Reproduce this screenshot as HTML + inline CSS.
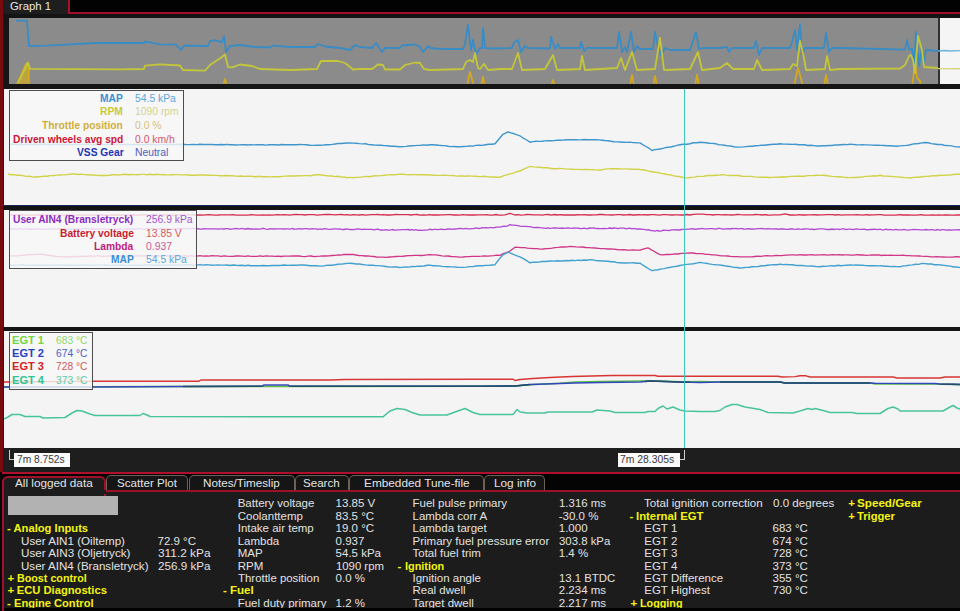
<!DOCTYPE html>
<html><head><meta charset="utf-8"><style>
html,body{margin:0;padding:0;}
body{width:960px;height:611px;overflow:hidden;position:relative;background:#1c1c1c;font-family:"Liberation Sans", sans-serif;}
.r{position:absolute;}
.t{position:absolute;white-space:pre;transform-origin:0 0;}
svg{position:absolute;left:0;top:0;}
</style></head><body>
<div class=r style="left:0;top:0;width:960px;height:18px;background:#020202"></div>
<div class=r style="left:3px;top:0;width:65px;height:14px;background:#1e1e1e"></div>
<div class=r style="left:68px;top:0;width:2px;height:14.5px;background:#a8102c"></div>
<div class=r style="left:68px;top:12.3px;width:892px;height:2.2px;background:#a0102c"></div>
<div class=r style="left:3px;top:14.4px;width:957px;height:3.4px;background:#141414"></div>
<!-- overview -->
<div class=r style="left:3px;top:17.7px;width:957px;height:71.5px;background:#151515"></div>
<div class=r style="left:9.4px;top:17.7px;width:928.6px;height:66px;background:#8b8b8b"></div>
<div class=r style="left:938px;top:17.7px;width:1.6px;height:66px;background:#303030"></div>
<div class=r style="left:939.6px;top:17.7px;width:20.4px;height:66px;background:#f5f5f5"></div>
<!-- panels -->
<div class=r style="left:4px;top:89px;width:956px;height:116px;background:#f4f4f4"></div>
<div class=r style="left:3px;top:205px;width:957px;height:4.6px;background:#141414"></div>
<div class=r style="left:3px;top:205px;width:957px;height:1.2px;background:#18245a"></div>
<div class=r style="left:4px;top:209.6px;width:956px;height:117.2px;background:#f4f4f4"></div>
<div class=r style="left:3px;top:326.8px;width:957px;height:3.9px;background:#141414"></div>
<div class=r style="left:4px;top:330.7px;width:956px;height:117.1px;background:#f4f4f4"></div>
<div class=r style="left:2.5px;top:447.8px;width:957.5px;height:24.5px;background:#1e1e1e"></div>
<!-- left border -->
<div class=r style="left:0;top:0;width:2.6px;height:474px;background:#780a10"></div>
<!-- bottom tabs -->
<div class=r style="left:0;top:472.3px;width:960px;height:2px;background:#b0102c"></div>
<div class=r style="left:0;top:474.3px;width:960px;height:16px;background:#040404"></div>
<div class=r style="left:0;top:490.2px;width:960px;height:1.8px;background:#9c1028"></div>
<div class=r style="left:0;top:472px;width:1.6px;height:139px;background:#040404"></div>
<!-- tabs -->
<div class=r style="left:106px;top:475px;width:81.6px;height:15px;background:#151515;border:1px solid #6e6052;border-bottom:none;border-radius:5px 5px 0 0;box-sizing:border-box;"></div>
<div class=r style="left:188.6px;top:475px;width:106.4px;height:15px;background:#151515;border:1px solid #6e6052;border-bottom:none;border-radius:5px 5px 0 0;box-sizing:border-box;"></div>
<div class=r style="left:295px;top:475px;width:54.4px;height:15px;background:#151515;border:1px solid #6e6052;border-bottom:none;border-radius:5px 5px 0 0;box-sizing:border-box;"></div>
<div class=r style="left:349.4px;top:475px;width:134.9px;height:15px;background:#151515;border:1px solid #6e6052;border-bottom:none;border-radius:5px 5px 0 0;box-sizing:border-box;"></div>
<div class=r style="left:484.3px;top:475px;width:61.2px;height:15px;background:#151515;border:1px solid #6e6052;border-bottom:none;border-radius:5px 5px 0 0;box-sizing:border-box;"></div>
<div class=r style="left:1.6px;top:475.5px;width:104.4px;height:20px;background:#1c1c1c;border:2px solid #a0102a;border-bottom:none;border-radius:6px 6px 0 0;box-sizing:border-box;"></div>
<div class=r style="left:1.5px;top:490px;width:104.5px;height:4px;background:#1c1c1c;"></div>
<div class=r style="left:1.6px;top:480px;width:2px;height:131px;background:#a0102a;"></div>
<!-- search box -->
<div class=r style="left:7.5px;top:495.5px;width:110px;height:19.5px;background:#b2b2b2"></div>

<svg width="960" height="611" viewBox="0 0 960 611">
<defs><clipPath id="ov"><rect x="9.4" y="17.7" width="950.6" height="66"/></clipPath><clipPath id="c1"><rect x="4" y="89" width="956" height="116"/></clipPath><clipPath id="c2"><rect x="4" y="209.6" width="956" height="117.2"/></clipPath><clipPath id="c3"><rect x="4" y="330.7" width="956" height="117.1"/></clipPath><clipPath id="ovl"><rect x="183" y="330" width="79" height="118"/><rect x="290" y="330" width="240" height="118"/><rect x="645" y="330" width="45" height="118"/><rect x="720" y="330" width="150" height="118"/><rect x="940" y="330" width="20" height="118"/></clipPath></defs>
<g clip-path="url(#ov)">
<polygon points="17,84 25,65 28,63 30,70 29,84" fill="#d8b01c" opacity="0.65"/>
<polyline points="9.4,86.0 16.0,86.0 17.0,84.0 22.0,73.0 26.0,64.0 28.0,66.0 29.0,84.0 31.0,86.0 223.0,86.0 225.0,79.0 227.0,86.0 467.0,86.0 470.0,72.0 474.0,86.0 481.0,86.0 483.0,77.0 485.0,86.0 551.0,86.0 553.0,80.0 555.0,86.0 630.0,86.0 632.0,75.0 634.0,86.0 653.0,86.0 655.0,76.0 657.0,86.0 695.0,86.0 697.0,75.0 699.0,86.0 794.0,86.0 798.0,68.0 803.0,86.0 824.0,86.0 826.0,75.0 828.0,86.0 912.0,86.0 913.0,80.0 915.0,62.0 917.0,78.0 920.0,81.0 921.0,86.0 938.0,86.0" fill="none" stroke="#d4a81c" stroke-width="1.8" stroke-linejoin="round" opacity="1"/>
<polyline points="16.0,20.6 27.0,20.6 29.0,46.0 47.0,45.6 95.0,43.0 120.0,43.0 144.0,43.0 145.0,41.5 160.0,44.4 176.0,44.6 181.0,50.0 184.0,45.5 200.0,46.0 208.0,46.0 210.0,41.0 215.0,40.4 222.0,42.0 224.0,36.0 226.0,52.0 230.0,46.0 240.0,45.0 255.0,47.0 270.0,47.5 273.0,45.6 290.0,47.0 315.0,47.0 318.0,44.0 325.0,46.5 340.0,48.0 350.0,50.0 355.0,45.0 360.0,47.0 372.0,48.0 376.0,43.0 382.0,52.0 385.0,48.0 400.0,48.0 402.0,45.5 415.0,44.5 420.0,47.0 423.0,52.0 428.0,46.0 430.0,48.0 440.0,49.0 463.0,49.0 465.0,44.0 468.0,25.0 471.0,50.0 473.0,40.0 476.0,54.0 480.0,48.0 482.0,48.0 483.0,28.0 485.0,48.0 492.0,48.5 512.0,48.0 514.0,42.0 518.0,40.0 521.0,52.0 525.0,46.0 528.0,48.0 550.0,48.5 551.0,37.0 555.0,49.0 558.0,44.0 560.0,48.0 580.0,48.0 581.0,42.0 584.0,51.0 587.0,48.0 600.0,48.0 617.0,48.0 619.0,32.0 622.0,52.0 625.0,47.0 627.0,52.0 631.0,32.0 634.0,52.0 637.0,46.0 640.0,49.0 653.0,49.0 655.0,32.0 658.0,47.0 661.0,55.0 665.0,48.0 670.0,50.0 690.0,50.0 696.0,32.0 699.0,49.0 703.0,48.0 720.0,48.0 727.0,47.0 729.0,52.0 732.0,48.0 754.0,48.0 756.0,41.0 759.0,55.0 762.0,48.0 790.0,48.0 792.0,42.0 795.0,30.0 797.0,50.0 800.0,24.0 802.0,54.0 805.0,48.0 824.0,48.0 826.0,33.0 829.0,52.0 832.0,48.0 840.0,48.0 880.0,49.0 905.0,49.6 907.0,40.0 909.0,49.6 912.0,49.0 914.0,65.0 916.0,32.0 919.0,66.0 922.0,48.0 924.0,63.0 926.0,50.0 938.0,51.0" fill="none" stroke="#3a8cc4" stroke-width="1.8" stroke-linejoin="round" opacity="1"/>
<polyline points="18.0,83.0 28.0,62.5 30.0,68.8 120.0,69.4 144.0,69.0 145.0,65.6 160.0,64.4 180.0,65.5 183.0,70.0 205.0,70.6 210.0,65.0 222.0,57.0 225.0,54.5 228.0,67.0 232.0,67.4 240.0,64.5 252.0,66.0 260.0,69.0 290.0,70.0 317.0,69.0 321.0,61.0 338.0,61.0 345.0,63.0 353.0,69.5 360.0,69.0 372.0,69.0 378.0,64.5 383.0,65.0 385.0,69.5 400.0,69.5 405.0,65.0 415.0,62.5 420.0,63.0 424.0,69.0 430.0,70.0 463.0,69.0 466.0,62.0 470.0,60.0 473.0,62.0 475.0,53.0 478.0,68.0 480.0,69.0 484.0,64.0 488.0,70.0 500.0,69.0 512.0,69.0 518.0,53.0 522.0,70.0 545.0,69.0 553.0,55.0 557.0,70.0 580.0,69.0 582.0,56.0 585.0,70.0 600.0,69.0 617.0,68.0 621.0,58.0 625.0,70.0 632.0,52.0 637.0,70.0 655.0,69.0 660.0,38.0 664.0,70.0 690.0,69.0 698.0,52.0 702.0,70.0 720.0,68.0 727.0,63.0 733.0,69.0 754.0,69.0 757.0,60.0 762.0,70.0 790.0,69.0 793.0,64.0 797.0,66.0 800.0,41.0 804.0,58.0 806.0,70.0 825.0,69.0 827.0,56.0 830.0,70.0 840.0,69.0 900.0,68.5 905.0,65.0 909.0,56.0 911.0,55.0 913.0,60.0 915.0,73.0 918.0,36.0 922.0,50.0 924.0,67.0 938.0,68.0" fill="none" stroke="#c4c63a" stroke-width="1.8" stroke-linejoin="round" opacity="1"/>
<polyline points="938.0,51.0 945.0,50.5 950.0,51.0 960.0,50.6" fill="none" stroke="#6fb2da" stroke-width="1.4" stroke-linejoin="round" opacity="1"/>
<polyline points="938.0,68.6 960.0,68.8" fill="none" stroke="#d6d67a" stroke-width="1.4" stroke-linejoin="round" opacity="1"/>
</g>
<g clip-path="url(#c1)"><polyline points="10.0,144.4 13.3,144.3 16.7,144.6 20.0,144.2 23.1,144.5 26.2,144.4 29.2,144.2 32.3,144.5 35.4,144.2 38.5,144.5 41.5,144.2 44.6,144.3 47.7,144.5 50.8,144.7 53.8,144.3 56.9,144.3 60.0,144.6 63.1,144.8 66.2,144.5 69.2,144.4 72.3,144.8 75.4,144.2 78.5,144.7 81.5,144.4 84.6,144.3 87.7,144.3 90.8,144.4 93.8,144.7 96.9,144.3 100.0,144.5 103.1,144.6 106.1,144.4 109.2,144.5 112.3,144.2 115.4,144.2 118.4,144.3 121.5,144.6 124.6,144.5 127.7,144.4 130.7,144.6 133.8,144.5 136.9,144.4 140.0,144.7 143.0,144.6 146.1,144.3 149.2,144.5 152.3,144.5 155.3,144.7 158.4,144.6 161.5,144.4 164.6,144.8 167.6,144.3 170.7,144.5 173.8,144.7 176.9,144.3 179.9,144.5 183.0,144.2 186.4,144.6 189.8,144.6 193.2,144.4 196.6,144.6 200.0,144.2 203.0,144.5 206.0,144.4 209.0,144.5 212.0,144.4 215.0,144.7 218.0,144.8 221.0,144.5 224.0,144.7 227.0,144.4 230.0,144.8 233.0,144.8 236.0,145.0 239.0,144.9 242.0,144.7 245.0,144.8 248.0,145.0 251.0,144.6 254.0,144.9 257.0,144.8 260.0,144.8 263.1,144.7 266.2,145.1 269.2,144.7 272.3,144.7 275.4,144.7 278.5,145.0 281.5,144.5 284.6,144.7 287.7,144.7 290.8,144.8 293.8,144.8 296.9,144.8 300.0,144.4 303.3,144.6 306.7,144.7 310.0,145.2 313.3,145.4 316.7,145.1 320.0,145.3 323.0,145.1 326.0,144.8 329.0,144.7 332.0,144.4 335.0,144.0 338.0,143.5 341.0,143.5 344.0,143.2 347.0,143.0 350.0,143.0 353.1,143.1 356.2,143.2 359.4,143.6 362.5,143.9 365.6,143.8 368.8,144.6 371.9,144.7 375.0,145.1 378.1,145.3 381.2,145.3 384.4,145.6 387.5,145.7 390.6,146.3 393.8,146.2 396.9,146.5 400.0,146.8 403.0,146.6 406.0,146.4 409.0,146.0 412.0,145.8 415.0,145.6 418.0,145.4 421.0,145.3 424.0,144.9 427.0,145.2 430.0,144.8 433.0,144.7 436.0,145.0 439.0,145.3 442.0,145.5 445.0,145.6 448.0,146.3 451.0,146.6 454.0,146.5 457.0,146.8 460.0,146.8 463.2,146.5 466.4,146.4 469.5,146.0 472.7,146.1 475.9,145.4 479.1,145.1 482.3,145.4 485.5,144.8 488.6,144.3 491.8,144.3 495.0,143.7 499.0,139.0 503.0,134.3 508.0,131.9 511.0,132.9 514.0,133.7 517.0,134.8 520.0,135.8 523.3,138.2 526.7,140.0 530.0,142.2 533.0,141.6 536.0,141.3 539.0,141.4 542.0,141.3 545.0,140.9 548.0,140.8 551.0,140.7 554.0,140.6 557.0,140.2 560.0,140.2 563.0,140.1 566.0,139.8 569.0,139.7 572.0,139.7 575.0,139.6 578.0,139.8 581.0,139.9 584.0,139.5 587.0,139.7 590.0,139.6 593.0,139.8 596.0,139.8 599.0,139.9 602.0,140.2 605.0,140.5 608.0,140.7 611.0,141.3 614.0,141.7 617.0,141.9 620.0,142.0 623.3,142.2 626.7,142.4 630.0,142.1 633.3,142.6 636.7,142.8 640.0,142.9 643.0,144.8 646.0,146.5 649.0,148.2 652.0,150.5 655.1,149.6 658.2,149.3 661.3,148.8 664.4,147.9 667.6,147.3 670.7,147.0 673.8,146.3 676.9,145.4 680.0,144.8 683.3,144.3 686.7,144.2 690.0,143.7 693.3,142.8 696.7,142.7 700.0,142.3 703.1,142.5 706.2,142.7 709.2,143.3 712.3,143.4 715.4,143.7 718.5,144.7 721.5,144.9 724.6,145.3 727.7,145.9 730.8,146.0 733.8,146.7 736.9,147.1 740.0,147.1 743.1,146.9 746.2,146.6 749.2,146.3 752.3,146.2 755.4,145.8 758.5,145.6 761.5,145.1 764.6,145.3 767.7,144.7 770.8,144.5 773.8,144.3 776.9,144.2 780.0,143.7 783.1,144.1 786.2,144.1 789.2,144.2 792.3,144.4 795.4,144.3 798.5,144.7 801.5,144.7 804.6,144.8 807.7,145.5 810.8,145.3 813.8,145.6 816.9,146.0 820.0,146.0 823.0,145.7 826.0,145.7 829.0,145.5 832.0,145.5 835.0,144.9 838.0,145.0 841.0,144.7 844.0,144.5 847.0,144.6 850.0,144.3 853.1,144.4 856.2,144.7 859.4,144.9 862.5,144.7 865.6,144.9 868.8,144.9 871.9,145.1 875.0,145.3 878.1,145.2 881.2,145.4 884.4,145.5 887.5,145.8 890.6,145.8 893.8,146.0 896.9,146.2 900.0,145.9 903.1,145.6 906.2,145.4 909.4,145.0 912.5,144.1 915.6,143.7 918.8,143.5 921.9,142.9 925.0,142.5 928.2,142.8 931.4,143.6 934.5,144.0 937.7,144.5 940.9,144.4 944.1,145.2 947.3,145.5 950.5,145.6 953.6,146.4 956.8,146.9 960.0,147.0" fill="none" stroke="#3e96cc" stroke-width="1.4" stroke-linejoin="round" opacity="1"/><polyline points="8.0,174.0 11.0,174.8 14.0,174.6 17.0,175.3 20.0,175.2 23.0,175.6 26.0,176.4 29.0,176.2 32.0,176.8 35.0,177.0 38.1,176.7 41.2,176.5 44.2,176.1 47.3,176.3 50.4,175.6 53.5,175.5 56.5,175.1 59.6,175.0 62.7,174.9 65.8,174.9 68.8,174.4 71.9,174.0 75.0,173.9 78.1,174.5 81.2,174.1 84.4,174.6 87.5,174.7 90.6,175.0 93.8,175.0 96.9,175.4 100.0,175.5 103.1,175.5 106.2,175.5 109.4,175.2 112.5,174.8 115.6,174.6 118.8,175.0 121.9,174.6 125.0,174.3 128.2,174.8 131.4,174.5 134.5,174.6 137.7,174.7 140.9,174.4 144.1,174.4 147.3,174.7 150.5,174.3 153.6,174.7 156.8,174.3 160.0,174.6 163.0,174.7 166.0,174.9 169.0,174.9 172.0,174.7 175.0,174.6 178.0,174.6 181.0,174.9 184.0,174.9 187.0,174.7 190.0,175.2 193.0,175.1 196.0,175.2 199.0,175.0 202.0,175.0 205.0,175.0 208.0,175.2 211.0,175.2 214.0,175.4 217.0,175.4 220.0,175.7 223.1,175.8 226.2,175.5 229.4,175.7 232.5,175.7 235.6,176.1 238.8,176.3 241.9,176.0 245.0,176.4 248.1,176.2 251.2,176.1 254.4,176.7 257.5,176.5 260.6,176.5 263.8,176.8 266.9,176.7 270.0,176.9 273.1,176.8 276.2,176.7 279.4,176.7 282.5,176.4 285.6,176.1 288.8,176.0 291.9,175.9 295.0,176.0 298.1,175.8 301.2,175.9 304.4,175.6 307.5,175.6 310.6,175.7 313.8,175.0 316.9,174.8 320.0,174.8 323.0,175.2 326.0,175.6 329.0,176.0 332.0,176.0 335.0,176.6 338.0,176.3 341.0,177.1 344.0,177.0 347.0,177.7 350.0,177.4 353.1,177.8 356.2,177.4 359.4,177.4 362.5,176.9 365.6,176.4 368.8,176.7 371.9,176.2 375.0,175.8 378.1,175.9 381.2,175.6 384.4,175.3 387.5,174.9 390.6,174.7 393.8,174.8 396.9,174.5 400.0,174.1 403.1,174.3 406.2,174.6 409.4,174.7 412.5,174.6 415.6,174.6 418.8,174.7 421.9,174.7 425.0,174.8 428.1,175.0 431.2,174.9 434.4,175.3 437.5,175.4 440.6,175.4 443.8,175.2 446.9,175.4 450.0,175.6 453.1,175.4 456.2,176.1 459.4,176.0 462.5,176.0 465.6,176.2 468.8,175.9 471.9,176.1 475.0,176.3 478.1,176.5 481.2,176.6 484.4,176.3 487.5,176.7 490.6,177.0 493.8,177.0 496.9,177.2 500.0,177.3 503.3,175.8 506.7,174.8 510.0,173.9 513.3,173.1 516.7,171.7 520.0,171.0 523.3,169.4 526.7,167.8 530.0,166.4 533.3,166.9 536.7,167.1 540.0,167.2 543.3,167.8 546.7,167.8 550.0,168.2 553.1,168.7 556.2,168.7 559.4,168.5 562.5,168.6 565.6,168.9 568.8,169.1 571.9,169.2 575.0,169.4 578.1,169.4 581.2,169.6 584.4,169.5 587.5,169.5 590.6,169.6 593.8,169.8 596.9,169.9 600.0,170.2 603.3,169.4 606.7,168.9 610.0,168.8 613.0,168.6 616.0,168.8 619.0,168.7 622.0,169.1 625.0,168.9 628.0,168.9 631.0,169.3 634.0,169.2 637.0,169.1 640.0,169.5 643.0,169.8 646.0,170.3 649.0,171.3 652.0,171.7 655.0,172.2 658.0,172.5 661.0,173.4 664.0,173.8 667.0,174.5 670.0,174.8 673.0,175.6 676.0,176.2 679.0,176.5 682.0,177.2 685.0,177.9 688.2,177.7 691.4,177.4 694.5,177.1 697.7,176.4 700.9,176.4 704.1,176.2 707.3,175.5 710.5,175.5 713.6,175.5 716.8,175.2 720.0,175.0 723.1,174.6 726.2,175.1 729.4,175.5 732.5,175.5 735.6,175.5 738.8,175.5 741.9,176.2 745.0,176.4 748.1,176.4 751.2,176.4 754.4,176.9 757.5,177.1 760.6,177.2 763.8,177.3 766.9,177.3 770.0,177.5 773.1,177.4 776.2,177.2 779.4,177.2 782.5,176.8 785.6,177.0 788.8,176.6 791.9,176.4 795.0,176.3 798.1,176.2 801.2,176.1 804.4,176.2 807.5,175.6 810.6,175.6 813.8,175.5 816.9,175.2 820.0,175.4 823.0,175.3 826.0,175.5 829.0,176.0 832.0,176.4 835.0,176.6 838.0,176.7 841.0,176.8 844.0,177.4 847.0,177.5 850.0,177.6 853.0,177.4 856.0,177.5 859.0,177.3 862.0,177.1 865.0,176.4 868.0,176.3 871.0,176.1 874.0,175.8 877.0,176.0 880.0,175.3 883.0,176.0 886.0,176.1 889.0,176.3 892.0,176.4 895.0,176.9 898.0,176.9 901.0,177.3 904.0,177.5 907.0,177.6 910.0,178.0 913.0,177.5 916.0,177.1 919.0,177.2 922.0,176.8 925.0,176.4 928.0,176.4 931.0,176.0 934.0,175.6 937.0,175.7 940.0,175.3 943.3,175.4 946.7,175.0 950.0,175.1 953.3,174.5 956.7,174.3 960.0,174.3" fill="none" stroke="#d2d24a" stroke-width="1.4" stroke-linejoin="round" opacity="1"/></g>
<g clip-path="url(#c2)"><polyline points="9.0,214.8 12.0,214.8 15.1,214.9 18.1,214.8 21.1,214.7 24.2,214.9 27.2,215.3 30.2,215.2 33.3,215.2 36.3,214.8 39.3,215.0 42.3,214.9 45.4,214.8 48.4,214.8 51.4,214.8 54.5,215.3 57.5,215.2 60.5,215.2 63.6,215.2 66.6,214.8 69.6,214.9 72.7,215.1 75.7,215.1 78.7,215.2 81.8,215.2 84.8,214.8 87.8,215.1 90.9,215.1 93.9,215.0 96.9,214.8 100.0,215.0 103.0,214.8 106.0,215.3 109.0,215.2 112.1,215.0 115.1,214.9 118.1,215.2 121.2,215.0 124.2,215.2 127.2,215.2 130.3,215.0 133.3,214.9 136.3,215.1 139.4,215.0 142.4,214.8 145.4,214.9 148.5,215.2 151.5,214.7 154.5,214.7 157.6,215.1 160.6,214.9 163.6,215.0 166.7,215.0 169.7,214.9 172.7,215.3 175.7,214.8 178.8,214.9 181.8,214.8 184.8,215.1 187.9,214.9 190.9,214.9 193.9,215.1 197.0,214.9 200.0,215.0 203.0,215.2 206.0,214.8 209.0,214.7 212.0,214.8 215.0,215.1 218.0,215.0 221.0,214.8 224.0,214.9 227.0,214.8 230.0,214.9 233.0,214.7 236.0,215.1 239.0,215.2 242.0,215.2 245.0,215.1 248.0,215.2 251.0,214.6 254.0,214.8 257.0,215.2 260.0,215.1 263.0,214.8 266.0,215.2 269.0,215.0 272.0,215.1 275.0,214.8 278.0,214.7 281.0,214.8 284.0,214.6 287.0,214.8 290.0,215.1 293.0,214.7 296.0,214.5 299.0,214.6 302.0,214.6 305.0,215.0 308.0,214.7 311.0,214.7 314.0,214.6 317.0,215.1 320.0,214.8 323.0,214.6 326.1,214.5 329.1,214.5 332.1,214.6 335.2,214.9 338.2,214.6 341.2,214.5 344.3,214.8 347.3,214.6 350.3,215.1 353.4,214.6 356.4,214.8 359.4,215.0 362.5,214.7 365.5,215.1 368.5,214.8 371.6,214.6 374.6,214.7 377.6,214.5 380.7,214.8 383.7,214.6 386.7,215.0 389.8,215.0 392.8,214.8 395.8,214.5 398.9,214.7 401.9,214.6 404.9,214.6 408.0,214.6 411.0,215.0 414.0,214.6 417.0,214.5 420.1,215.1 423.1,214.8 426.1,215.1 429.2,214.7 432.2,215.0 435.2,214.9 438.3,215.0 441.3,214.9 444.3,214.8 447.4,214.6 450.4,214.6 453.4,215.0 456.5,215.0 459.5,215.1 462.5,214.7 465.6,214.9 468.6,215.0 471.6,214.9 474.7,215.0 477.7,214.8 480.7,214.9 483.8,214.9 486.8,214.7 489.8,215.1 492.9,215.1 495.9,214.5 498.9,215.1 502.0,215.1 505.0,214.9 510.0,213.3 515.0,215.0 518.0,214.6 521.0,215.1 524.1,214.9 527.1,214.5 530.1,214.6 533.1,214.9 536.1,214.8 539.1,214.9 542.2,215.1 545.2,214.6 548.2,214.5 551.2,215.1 554.2,214.5 557.2,215.0 560.3,214.6 563.3,215.0 566.3,215.0 569.3,215.0 572.3,214.8 575.3,215.0 578.4,214.6 581.4,214.9 584.4,214.7 587.4,215.0 590.4,215.0 593.4,214.8 596.5,214.8 599.5,214.5 602.5,214.5 605.5,214.9 608.5,214.8 611.6,215.0 614.6,214.9 617.6,214.6 620.6,214.7 623.6,215.0 626.6,214.8 629.7,214.5 632.7,215.0 635.7,215.0 638.7,214.6 641.7,214.8 644.7,214.7 647.8,215.0 650.8,214.7 653.8,214.6 656.8,214.8 659.8,215.1 662.8,214.6 665.9,214.6 668.9,214.9 671.9,215.0 674.9,214.8 677.9,214.8 680.9,215.0 684.0,215.0 687.0,214.5 690.0,215.0 693.3,214.3 696.7,214.1 700.0,214.1 703.3,214.2 706.7,214.7 710.0,214.6 713.0,215.0 716.1,214.6 719.1,214.6 722.2,214.8 725.2,214.7 728.3,214.8 731.3,215.0 734.3,214.9 737.4,214.5 740.4,214.7 743.5,214.8 746.5,214.8 749.6,214.9 752.6,214.8 755.7,214.5 758.7,214.6 761.7,215.0 764.8,214.7 767.8,215.0 770.9,215.1 773.9,214.9 777.0,214.9 780.0,214.9 785.0,213.8 790.0,215.0 793.0,214.8 796.1,215.1 799.1,214.7 802.1,215.0 805.2,215.0 808.2,214.9 811.2,214.8 814.3,214.6 817.3,215.0 820.4,214.8 823.4,214.9 826.4,214.6 829.5,214.6 832.5,214.6 835.5,215.0 838.6,214.7 841.6,215.1 844.6,214.8 847.7,214.9 850.7,214.8 853.8,214.9 856.8,214.6 859.8,214.8 862.9,215.1 865.9,214.7 868.9,215.0 872.0,214.8 875.0,214.8 878.0,214.6 881.1,214.6 884.1,215.2 887.1,215.1 890.2,215.1 893.2,215.1 896.2,215.2 899.3,214.7 902.3,215.0 905.4,214.9 908.4,215.0 911.4,215.2 914.5,215.1 917.5,215.2 920.5,214.7 923.6,215.0 926.6,215.1 929.6,215.1 932.7,215.0 935.7,215.2 938.8,214.9 941.8,215.2 944.8,214.9 947.9,215.0 950.9,215.2 953.9,215.1 957.0,214.9 960.0,215.0" fill="none" stroke="#d42e4e" stroke-width="1.3" stroke-linejoin="round" opacity="1"/><polyline points="9.0,228.8 11.0,229.0 13.0,228.9 15.1,229.1 17.1,229.1 19.1,228.6 21.1,228.6 23.2,229.3 25.2,228.8 27.2,228.8 29.2,229.4 31.2,229.0 33.3,229.3 35.3,229.0 37.3,229.1 39.3,228.7 41.4,229.1 43.4,229.3 45.4,229.0 47.4,229.2 49.4,229.2 51.5,228.6 53.5,229.2 55.5,229.1 57.5,228.8 59.6,228.6 61.6,229.3 63.6,229.0 65.6,229.2 67.6,229.3 69.7,229.2 71.7,229.4 73.7,228.9 75.7,229.3 77.8,229.0 79.8,229.4 81.8,229.3 83.8,228.6 85.8,228.7 87.9,228.7 89.9,229.4 91.9,228.9 93.9,229.1 96.0,228.8 98.0,229.0 100.0,228.9 102.0,228.9 104.0,229.1 106.0,229.1 108.0,229.3 110.0,229.1 112.0,229.4 114.0,229.3 116.0,229.4 118.0,229.1 120.0,228.7 122.0,229.3 124.0,229.4 126.0,229.3 128.0,229.0 130.0,229.1 132.0,228.7 134.0,229.2 136.0,229.0 138.0,228.7 140.0,228.5 142.0,229.2 144.0,229.4 146.0,228.5 148.0,229.2 150.0,228.8 152.0,228.6 154.0,228.7 156.0,229.1 158.0,229.2 160.0,228.5 162.0,229.0 164.0,228.5 166.0,229.1 168.0,228.7 170.0,229.2 172.0,229.3 174.0,228.9 176.0,229.3 178.0,228.7 180.0,228.5 182.0,228.9 184.0,228.4 186.0,228.6 188.0,228.7 190.0,228.9 192.0,228.5 194.0,228.4 196.0,229.1 198.0,228.6 200.0,229.2 202.0,229.2 204.0,228.7 206.0,228.8 208.0,228.8 210.0,228.9 212.0,228.9 214.0,228.9 216.0,228.9 218.0,229.2 220.0,228.8 222.0,228.8 224.0,229.0 226.0,228.6 228.0,228.7 230.0,229.3 232.0,228.9 234.0,228.9 236.0,228.4 238.0,228.8 240.0,228.9 242.0,228.4 244.0,229.0 246.0,229.0 248.0,228.5 250.0,229.0 252.0,228.9 254.0,229.1 256.0,228.8 258.0,229.1 260.0,229.1 262.0,228.5 264.0,228.5 266.0,229.1 268.0,229.3 270.0,228.7 272.0,228.9 274.0,229.0 276.0,228.8 278.0,228.8 280.0,228.8 282.0,228.8 284.0,229.0 286.0,228.8 288.0,228.8 290.0,229.2 292.0,228.5 294.0,229.0 296.0,229.2 298.0,228.8 300.0,228.7 302.0,229.2 304.0,228.7 306.0,228.7 308.0,228.9 310.0,229.2 312.0,228.6 314.0,228.8 316.0,228.8 318.0,229.3 320.0,228.9 322.0,229.3 324.0,228.7 326.0,228.9 328.0,229.2 330.0,229.4 332.0,229.1 334.0,228.9 336.0,228.8 338.0,229.2 340.0,228.9 342.0,229.5 344.0,229.5 346.0,229.0 348.0,229.1 350.0,229.6 352.0,229.4 354.0,229.6 356.0,229.2 358.0,229.0 360.0,229.2 362.0,229.7 364.0,229.2 366.0,229.3 368.0,229.4 370.0,229.4 372.0,229.4 374.0,229.9 376.0,229.3 378.0,229.1 380.0,230.0 382.0,230.0 384.0,230.1 386.0,229.6 388.0,230.1 390.0,230.1 392.0,229.5 394.0,230.0 396.0,230.1 398.0,229.9 400.0,229.8 402.0,229.6 404.0,229.7 406.0,229.6 408.0,229.5 410.0,230.0 412.0,229.7 414.0,230.2 416.0,229.6 418.0,230.3 420.0,230.2 422.0,230.3 424.0,230.2 426.0,230.2 428.0,229.8 430.0,229.2 432.0,229.8 434.0,229.3 436.0,229.3 438.0,229.6 440.0,229.4 442.0,229.2 444.0,229.6 446.0,229.3 448.0,229.0 450.0,228.8 452.0,229.3 454.0,228.9 456.0,229.1 458.0,228.7 460.0,228.5 462.0,228.7 464.0,228.9 466.0,228.3 468.0,228.8 470.0,228.8 472.0,228.7 474.0,228.6 476.0,227.8 478.0,228.3 480.0,228.5 482.0,227.7 484.0,227.8 486.0,227.7 488.0,227.9 490.0,227.7 492.0,227.7 494.0,227.9 496.0,227.2 498.0,227.2 500.0,227.2 502.0,226.7 504.0,226.1 506.0,226.4 508.0,225.8 510.0,224.6 512.0,225.2 514.0,225.2 516.0,225.4 518.0,225.7 520.0,226.1 522.0,226.3 524.0,226.3 526.0,226.3 528.0,226.6 530.0,226.7 532.0,227.2 534.0,227.6 536.0,227.5 538.0,227.4 540.0,227.7 542.0,227.9 544.0,228.1 546.0,228.3 548.0,227.9 550.0,228.3 552.0,228.2 554.0,228.0 556.0,228.0 558.0,228.1 560.0,228.3 562.0,228.0 564.0,228.3 566.0,228.1 568.0,227.9 570.0,228.2 572.0,228.3 574.0,227.8 576.0,228.1 578.0,228.1 580.0,228.5 582.0,228.6 584.0,228.1 586.0,228.6 588.0,228.5 590.0,228.0 592.0,228.2 594.0,227.9 596.0,228.6 598.0,228.4 600.0,228.6 602.0,228.6 604.0,228.5 606.0,228.6 608.0,228.4 610.0,228.0 612.0,228.5 614.0,228.0 616.0,228.1 618.0,228.7 620.0,228.1 622.0,228.2 624.0,228.2 626.0,228.9 628.0,228.3 630.0,228.2 632.0,228.9 634.0,228.3 636.0,229.0 638.0,228.8 640.0,229.0 642.1,229.4 644.3,229.4 646.4,230.0 648.6,229.6 650.7,230.6 652.9,230.7 655.0,231.2 657.0,230.5 659.1,231.0 661.1,231.1 663.2,230.2 665.2,230.3 667.3,230.4 669.3,230.6 671.4,229.9 673.4,229.8 675.5,229.7 677.5,230.0 679.5,230.0 681.6,229.5 683.6,229.4 685.7,229.3 687.7,229.2 689.8,229.1 691.8,228.7 693.9,229.0 695.9,229.3 698.0,228.7 700.0,228.9 702.0,228.4 704.0,228.9 706.0,228.9 708.0,228.9 710.0,228.7 712.0,228.7 714.0,228.9 716.0,229.1 718.0,228.4 720.0,228.4 722.0,229.0 724.0,229.1 726.0,228.8 728.0,228.7 730.0,229.0 732.0,228.5 734.0,228.6 736.0,228.5 738.0,228.9 740.0,228.7 742.0,228.6 744.0,229.0 746.0,229.2 748.0,228.7 750.0,229.0 752.0,228.8 754.0,229.2 756.0,228.9 758.0,228.7 760.0,228.6 762.0,228.5 764.0,228.9 766.0,228.8 768.0,228.6 770.0,228.8 772.0,228.8 774.0,229.2 776.0,228.6 778.0,229.4 780.0,228.9 782.0,229.0 784.0,228.9 786.0,229.3 788.0,229.3 790.0,229.0 792.0,229.0 794.0,229.2 796.0,229.3 798.0,228.9 800.0,229.2 802.0,229.4 804.0,229.0 806.0,228.8 808.0,228.8 810.0,229.3 812.0,229.2 814.0,229.5 816.0,229.4 818.0,228.9 820.0,228.8 822.0,228.9 824.0,228.9 826.0,229.3 828.0,229.5 830.0,229.5 832.0,229.0 834.0,229.5 836.0,229.1 838.0,229.2 840.0,229.5 842.0,228.9 844.0,228.9 846.0,229.6 848.0,229.1 850.0,229.2 852.0,229.4 854.0,229.5 856.0,228.9 858.0,229.2 860.0,229.3 862.0,229.4 864.0,229.1 866.0,229.5 868.0,229.8 870.0,229.3 872.0,229.5 874.0,229.1 876.0,229.3 878.0,229.6 880.0,229.2 882.0,229.9 884.0,229.9 886.0,229.2 888.0,229.9 890.0,229.4 892.0,229.8 894.0,229.8 896.0,229.4 898.0,229.8 900.0,229.8 902.0,229.9 904.0,229.4 906.0,229.9 908.0,230.1 910.0,229.8 912.0,229.7 914.0,229.4 916.0,229.7 918.0,229.6 920.0,229.9 922.0,229.9 924.0,229.8 926.0,229.5 928.0,229.9 930.0,229.9 932.0,229.5 934.0,230.2 936.0,230.0 938.0,229.5 940.0,230.3 942.0,229.6 944.0,229.7 946.0,230.1 948.0,230.0 950.0,230.0 952.0,230.1 954.0,229.9 956.0,229.8 958.0,229.7 960.0,230.0" fill="none" stroke="#b048d0" stroke-width="1.3" stroke-linejoin="round" opacity="1"/><polyline points="9.0,256.1 12.1,255.9 15.2,255.8 18.3,255.7 21.4,255.3 24.5,255.3 27.6,254.5 30.7,254.6 33.8,254.7 36.9,254.3 40.0,254.2 43.3,254.3 46.7,255.0 50.0,255.3 53.3,256.0 56.7,256.5 60.0,256.7 63.1,256.8 66.2,256.7 69.2,257.0 72.3,256.9 75.4,256.4 78.5,256.7 81.5,256.2 84.6,256.5 87.7,256.1 90.8,255.9 93.8,256.4 96.9,255.9 100.0,255.8 103.0,256.3 106.1,256.2 109.1,255.9 112.1,256.3 115.2,256.0 118.2,256.1 121.2,255.8 124.2,256.3 127.3,256.1 130.3,256.3 133.3,256.2 136.4,255.9 139.4,255.9 142.4,255.8 145.5,255.8 148.5,255.7 151.5,255.9 154.5,256.1 157.6,255.7 160.6,256.1 163.6,255.9 166.7,255.9 169.7,256.2 172.7,256.0 175.8,255.9 178.8,256.0 181.8,256.1 184.8,255.7 187.9,256.3 190.9,255.7 193.9,256.1 197.0,256.2 200.0,255.7 203.0,256.2 206.0,255.9 209.0,256.1 212.0,255.7 215.0,255.8 218.0,255.9 221.0,256.3 224.0,255.9 227.0,256.2 230.0,256.3 233.0,256.3 236.0,256.0 239.0,256.0 242.0,256.1 245.0,256.3 248.0,255.9 251.0,256.3 254.0,256.3 257.0,256.4 260.0,255.9 263.0,256.4 266.0,255.9 269.0,256.1 272.0,256.2 275.0,256.4 278.0,256.1 281.0,256.5 284.0,256.2 287.0,256.1 290.0,256.1 293.0,256.0 296.0,256.0 299.0,256.0 302.0,256.4 305.0,256.6 308.0,256.1 311.0,256.0 314.0,256.6 317.0,256.3 320.0,256.2 323.0,255.9 326.0,256.0 329.0,255.9 332.0,255.5 335.0,255.3 338.0,254.8 341.0,255.1 344.0,254.4 347.0,254.5 350.0,254.5 353.0,254.4 356.0,255.0 359.0,255.5 362.0,255.6 365.0,256.0 368.0,255.9 371.0,256.4 374.0,256.5 377.0,257.2 380.0,257.2 383.1,257.1 386.2,257.3 389.4,257.0 392.5,256.9 395.6,256.5 398.8,256.3 401.9,256.3 405.0,256.0 408.1,255.7 411.2,255.6 414.4,255.3 417.5,255.3 420.6,255.5 423.8,255.3 426.9,254.9 430.0,254.7 433.0,254.8 436.0,254.9 439.0,255.3 442.0,255.8 445.0,256.1 448.0,256.0 451.0,256.5 454.0,256.7 457.0,256.9 460.0,257.1 463.1,257.0 466.2,256.7 469.2,256.7 472.3,256.3 475.4,256.3 478.5,256.4 481.5,256.2 484.6,255.8 487.7,256.1 490.8,255.8 493.8,255.6 496.9,255.1 500.0,255.3 503.3,253.7 506.7,252.5 510.0,251.0 515.0,247.2 518.1,247.3 521.2,247.7 524.4,247.7 527.5,248.1 530.6,248.4 533.8,248.7 536.9,248.7 540.0,249.2 543.0,249.0 546.0,248.6 549.0,248.5 552.0,248.2 555.0,247.7 558.0,247.4 561.0,246.9 564.0,247.0 567.0,246.8 570.0,246.3 573.1,246.6 576.2,246.9 579.4,247.1 582.5,247.0 585.6,247.5 588.8,247.6 591.9,247.9 595.0,248.0 598.1,248.3 601.2,248.6 604.4,248.7 607.5,249.0 610.6,248.8 613.8,249.1 616.9,249.5 620.0,249.8 623.3,249.6 626.7,250.0 630.0,250.1 633.3,249.8 636.7,250.2 640.0,250.1 644.0,248.9 648.0,247.8 651.0,249.6 654.0,251.3 657.0,253.1 660.0,254.7 663.0,254.8 666.0,254.5 669.0,254.5 672.0,254.3 675.0,253.8 678.0,254.0 681.0,253.3 684.0,253.3 687.0,253.1 690.0,252.9 693.1,253.0 696.2,253.7 699.4,253.7 702.5,253.7 705.6,254.3 708.8,254.3 711.9,254.8 715.0,254.9 718.1,255.3 721.2,255.8 724.4,255.9 727.5,256.0 730.6,256.4 733.8,256.6 736.9,256.7 740.0,256.8 743.0,256.9 746.0,256.8 749.0,256.9 752.0,256.8 755.0,256.5 758.0,256.2 761.0,256.4 764.0,255.8 767.0,255.7 770.0,255.9 773.0,255.8 776.0,255.4 779.0,255.6 782.0,255.6 785.0,255.2 788.0,255.1 791.0,254.9 794.0,254.8 797.0,255.1 800.0,254.6 803.0,255.0 806.0,255.0 809.0,254.8 812.0,254.6 815.0,255.1 818.0,254.8 821.0,254.8 824.0,254.7 827.0,255.1 830.0,254.8 833.0,254.7 836.0,254.9 839.0,254.7 842.0,255.0 845.0,254.9 848.0,254.8 851.0,255.1 854.0,255.2 857.0,254.7 860.0,255.0 863.1,254.9 866.2,255.3 869.2,255.2 872.3,254.9 875.4,255.0 878.5,254.9 881.5,255.5 884.6,255.1 887.7,255.3 890.8,255.2 893.8,255.3 896.9,255.3 900.0,255.4 903.1,255.2 906.2,255.7 909.2,255.6 912.3,255.8 915.4,255.9 918.5,256.0 921.5,256.2 924.6,256.3 927.7,256.4 930.8,256.8 933.8,256.8 936.9,256.6 940.0,256.9 943.3,257.0 946.7,257.2 950.0,257.2 953.3,257.0 956.7,256.7 960.0,257.0" fill="none" stroke="#d03686" stroke-width="1.3" stroke-linejoin="round" opacity="1"/><polyline points="10.0,265.3 13.3,265.3 16.7,265.1 20.0,265.0 23.1,264.8 26.2,265.2 29.2,265.1 32.3,265.3 35.4,265.0 38.5,265.3 41.5,265.0 44.6,265.3 47.7,265.2 50.8,265.0 53.8,265.1 56.9,265.2 60.0,264.9 63.1,265.1 66.2,265.3 69.2,265.0 72.3,265.3 75.4,265.2 78.5,265.3 81.5,265.0 84.6,264.9 87.7,265.3 90.8,265.3 93.8,265.1 96.9,264.9 100.0,264.9 103.1,265.2 106.1,265.0 109.2,265.4 112.3,265.2 115.4,264.9 118.4,265.2 121.5,265.0 124.6,265.4 127.7,265.3 130.7,265.1 133.8,265.2 136.9,265.2 140.0,265.3 143.0,265.4 146.1,264.8 149.2,265.0 152.3,265.2 155.3,265.0 158.4,265.2 161.5,264.9 164.6,265.3 167.6,265.1 170.7,264.9 173.8,265.2 176.9,265.0 179.9,264.9 183.0,265.1 186.4,264.8 189.8,264.8 193.2,265.2 196.6,265.1 200.0,264.6 203.0,265.1 206.0,264.7 209.0,264.9 212.0,265.3 215.0,265.1 218.0,265.0 221.0,265.1 224.0,265.1 227.0,265.0 230.0,265.5 233.0,265.0 236.0,265.3 239.0,265.5 242.0,265.3 245.0,265.7 248.0,265.3 251.0,265.8 254.0,265.8 257.0,265.7 260.0,265.8 263.1,265.5 266.2,265.7 269.2,265.7 272.3,265.5 275.4,265.4 278.5,265.5 281.5,265.3 284.6,265.0 287.7,265.4 290.8,265.1 293.8,265.2 296.9,265.3 300.0,264.9 303.3,265.0 306.7,265.2 310.0,265.7 313.3,265.7 316.7,265.8 320.0,266.1 323.0,266.1 326.0,265.4 329.0,265.2 332.0,265.2 335.0,264.8 338.0,264.3 341.0,264.1 344.0,263.8 347.0,263.4 350.0,263.2 353.1,263.5 356.2,264.0 359.4,264.0 362.5,264.5 365.6,264.9 368.8,265.2 371.9,265.1 375.0,265.5 378.1,265.6 381.2,265.9 384.4,266.2 387.5,266.7 390.6,267.1 393.8,266.9 396.9,267.0 400.0,267.6 403.0,267.1 406.0,266.9 409.0,267.1 412.0,266.4 415.0,266.6 418.0,266.1 421.0,266.3 424.0,266.0 427.0,265.3 430.0,265.1 433.0,265.8 436.0,265.8 439.0,265.9 442.0,266.4 445.0,266.6 448.0,266.7 451.0,266.9 454.0,266.9 457.0,267.3 460.0,267.4 463.2,267.4 466.4,267.1 469.5,266.6 472.7,266.6 475.9,266.0 479.1,265.7 482.3,265.8 485.5,265.4 488.6,265.4 491.8,265.0 495.0,264.7 499.0,259.4 503.0,254.8 508.0,252.1 511.0,253.4 514.0,254.7 517.0,255.8 520.0,256.8 523.3,258.6 526.7,260.7 530.0,262.8 533.0,262.1 536.0,262.3 539.0,262.1 542.0,261.5 545.0,261.5 548.0,261.2 551.0,261.0 554.0,261.1 557.0,260.7 560.0,261.0 563.0,261.0 566.0,260.5 569.0,260.8 572.0,260.2 575.0,260.6 578.0,260.1 581.0,260.5 584.0,260.0 587.0,260.2 590.0,259.6 593.0,259.9 596.0,260.6 599.0,260.8 602.0,261.0 605.0,261.0 608.0,261.3 611.0,261.7 614.0,261.8 617.0,262.6 620.0,262.8 623.3,263.0 626.7,263.0 630.0,262.9 633.3,262.8 636.7,263.3 640.0,263.1 643.0,265.2 646.0,267.1 649.0,269.0 652.0,270.6 655.1,270.1 658.2,269.7 661.3,268.9 664.4,268.6 667.6,267.7 670.7,267.2 673.8,266.6 676.9,266.2 680.0,265.5 683.3,264.9 686.7,264.4 690.0,264.1 693.3,263.8 696.7,263.1 700.0,262.4 703.1,262.9 706.2,263.3 709.2,263.9 712.3,264.4 715.4,264.7 718.5,264.9 721.5,265.3 724.6,265.8 727.7,266.2 730.8,266.6 733.8,267.4 736.9,267.5 740.0,268.0 743.1,267.8 746.2,267.4 749.2,267.3 752.3,266.7 755.4,266.6 758.5,266.5 761.5,265.8 764.6,265.8 767.7,265.3 770.8,264.9 773.8,264.6 776.9,264.7 780.0,264.1 783.1,264.6 786.2,264.4 789.2,264.8 792.3,264.7 795.4,265.2 798.5,265.5 801.5,265.4 804.6,265.8 807.7,266.1 810.8,265.9 813.8,266.2 816.9,266.6 820.0,266.8 823.0,266.2 826.0,266.4 829.0,265.9 832.0,265.7 835.0,266.0 838.0,265.3 841.0,265.7 844.0,265.4 847.0,265.2 850.0,265.0 853.1,265.1 856.2,265.0 859.4,265.2 862.5,265.1 865.6,265.6 868.8,265.7 871.9,265.8 875.0,265.6 878.1,265.9 881.2,265.8 884.4,266.2 887.5,266.3 890.6,266.6 893.8,266.5 896.9,266.6 900.0,266.8 903.1,265.9 906.2,265.8 909.4,265.1 912.5,264.9 915.6,264.3 918.8,264.4 921.9,263.4 925.0,263.6 928.2,264.0 931.4,264.0 934.5,264.7 937.7,264.6 940.9,265.0 944.1,265.4 947.3,265.8 950.5,266.1 953.6,267.0 956.8,267.0 960.0,267.6" fill="none" stroke="#42a0d0" stroke-width="1.4" stroke-linejoin="round" opacity="1"/></g>
<g clip-path="url(#c3)"><polyline points="4.0,382.0 92.0,381.2 199.0,381.2 201.0,380.0 330.0,380.0 345.0,379.5 480.0,379.2 513.0,379.2 515.0,380.5 520.0,379.5 533.0,378.5 550.0,377.5 572.0,376.5 612.0,375.5 655.0,375.5 658.0,376.3 778.0,376.3 782.0,377.0 795.0,376.6 800.0,375.8 806.0,375.8 810.0,377.0 893.0,377.0 897.0,378.0 940.0,378.0 945.0,377.0 960.0,377.0" fill="none" stroke="#d83434" stroke-width="1.4" stroke-linejoin="round" opacity="1"/><polyline points="4.0,387.0 183.0,386.5 262.0,386.5 290.0,386.5 480.0,386.3 515.0,386.0 530.0,384.8 560.0,383.3 575.0,382.0 600.0,381.5 640.0,381.0 650.0,380.8 680.0,381.8 700.0,381.5 720.0,382.0 780.0,382.0 785.0,383.0 870.0,383.0 875.0,384.0 935.0,384.0 940.0,384.3 960.0,384.5" fill="none" stroke="#62c040" stroke-width="1.5" stroke-linejoin="round" opacity="1"/><polyline points="4.0,387.0 92.0,387.0 183.0,386.5 262.0,386.3 264.0,385.0 288.0,385.0 290.0,386.3 480.0,386.2 515.0,386.0 530.0,384.5 560.0,383.5 575.0,383.0 600.0,382.6 640.0,382.0 650.0,381.0 680.0,382.0 700.0,382.5 720.0,382.0 780.0,382.0 785.0,383.0 870.0,383.0 875.0,383.2 935.0,383.4 940.0,384.0 960.0,384.5" fill="none" stroke="#3048bc" stroke-width="1.5" stroke-linejoin="round" opacity="1"/><g clip-path="url(#ovl)"><polyline points="4.0,387.0 92.0,387.0 183.0,386.5 262.0,386.3 264.0,385.0 288.0,385.0 290.0,386.3 480.0,386.2 515.0,386.0 530.0,384.5 560.0,383.5 575.0,383.0 600.0,382.6 640.0,382.0 650.0,381.0 680.0,382.0 700.0,382.5 720.0,382.0 780.0,382.0 785.0,383.0 870.0,383.0 875.0,383.2 935.0,383.4 940.0,384.0 960.0,384.5" fill="none" stroke="#22506a" stroke-width="1.6" stroke-linejoin="round" opacity="1"/></g><polyline points="4.0,419.0 8.0,417.0 12.0,414.5 20.0,414.5 25.0,416.5 40.0,416.5 43.0,418.0 65.0,417.5 72.0,413.0 77.0,410.5 82.0,411.0 90.0,414.0 95.0,415.5 140.0,415.5 143.0,413.5 147.0,415.0 150.0,416.5 383.0,416.8 390.0,411.0 397.0,408.5 405.0,409.5 412.0,412.5 420.0,415.0 447.0,415.0 455.0,412.0 465.0,408.5 473.0,412.5 480.0,414.5 513.0,414.5 517.0,409.5 520.0,412.0 527.0,413.0 545.0,413.0 548.0,412.0 592.0,412.0 597.0,410.0 610.0,411.0 615.0,412.5 645.0,412.5 648.0,411.5 655.0,411.5 658.0,408.5 663.0,406.0 667.0,409.0 673.0,407.0 680.0,410.0 685.0,411.0 700.0,411.5 715.0,411.5 720.0,410.5 725.0,407.0 732.0,404.5 737.0,404.5 745.0,407.0 760.0,409.5 768.0,412.5 793.0,413.0 800.0,411.0 808.0,408.5 812.0,409.5 815.0,408.5 825.0,411.0 830.0,412.5 852.0,412.5 857.0,413.5 880.0,413.5 888.0,408.5 893.0,407.0 898.0,409.0 900.0,411.0 943.0,411.0 950.0,407.0 953.0,405.5 957.0,408.0 960.0,409.0" fill="none" stroke="#48c49a" stroke-width="1.5" stroke-linejoin="round" opacity="1"/></g>
</svg>
<!-- legends -->
<div class=r style="left:9.3px;top:89.7px;width:174.4px;height:71.2px;background:rgba(248,248,248,0.82);border:1.4px solid #4c4c4c;box-sizing:border-box;"></div>
<div class=r style="left:8.9px;top:210.1px;width:188.5px;height:58.6px;background:rgba(248,248,248,0.82);border:1.4px solid #4c4c4c;box-sizing:border-box;"></div>
<div class=r style="left:9.1px;top:331.6px;width:84.4px;height:58.3px;background:rgba(248,248,248,0.82);border:1.4px solid #4c4c4c;box-sizing:border-box;"></div>
<!-- cursor -->
<div class=r style="left:683.9px;top:89px;width:1.3px;height:358.8px;background:#3cc8bc"></div>
<!-- time labels -->
<div class=r style="left:13.7px;top:452.7px;width:56.2px;height:14.2px;background:#fafafa"></div>
<div class=r style="left:9px;top:450px;width:1.2px;height:9.5px;background:#cfcfcf"></div>
<div class=r style="left:9px;top:458.6px;width:4.7px;height:1.2px;background:#cfcfcf"></div>
<div class=r style="left:617.5px;top:453px;width:62.5px;height:13.9px;background:#fafafa"></div>
<div class=r style="left:684px;top:450px;width:1.2px;height:10px;background:#cfcfcf"></div>
<div class=r style="left:680px;top:459px;width:5px;height:1.2px;background:#cfcfcf"></div>

<div class=t style='left:10.40px;top:1.00px;font-size:11.5px;line-height:11.5px;font-weight:normal;color:#e6e6e6;transform:scaleX(0.9889);'>Graph 1</div><div class=t style='left:100.44px;top:93.00px;font-size:11.2px;line-height:11.2px;font-weight:bold;color:#3b8fd4;transform:scaleX(0.9150);'>MAP</div><div class=t style='left:134.70px;top:93.00px;font-size:11.5px;line-height:11.5px;font-weight:normal;color:#5aa6de;transform:scaleX(0.9000);'>54.5 kPa</div><div class=t style='left:100.44px;top:106.00px;font-size:11.2px;line-height:11.2px;font-weight:bold;color:#c9c93a;transform:scaleX(0.9150);'>RPM</div><div class=t style='left:134.70px;top:106.00px;font-size:11.5px;line-height:11.5px;font-weight:normal;color:#d4d48a;transform:scaleX(0.9000);'>1090 rpm</div><div class=t style='left:42.45px;top:120.00px;font-size:11.2px;line-height:11.2px;font-weight:bold;color:#cfae3a;transform:scaleX(0.9150);'>Throttle position</div><div class=t style='left:134.70px;top:120.00px;font-size:11.5px;line-height:11.5px;font-weight:normal;color:#d2c27e;transform:scaleX(0.9000);'>0.0 %</div><div class=t style='left:12.83px;top:134.00px;font-size:11.2px;line-height:11.2px;font-weight:bold;color:#cc1838;transform:scaleX(0.9150);'>Driven wheels avg spd</div><div class=t style='left:134.70px;top:134.00px;font-size:11.5px;line-height:11.5px;font-weight:normal;color:#d4566e;transform:scaleX(0.9000);'>0.0 km/h</div><div class=t style='left:76.53px;top:147.00px;font-size:11.2px;line-height:11.2px;font-weight:bold;color:#1c34b8;transform:scaleX(0.9150);'>VSS Gear</div><div class=t style='left:134.70px;top:147.00px;font-size:11.5px;line-height:11.5px;font-weight:normal;color:#4a5ec0;transform:scaleX(0.9000);'>Neutral</div><div class=t style='left:13.26px;top:214.00px;font-size:11.2px;line-height:11.2px;font-weight:bold;color:#8c2cc0;transform:scaleX(0.9150);'>User AIN4 (Bransletryck)</div><div class=t style='left:146.25px;top:214.00px;font-size:11.5px;line-height:11.5px;font-weight:normal;color:#a056d0;transform:scaleX(0.9000);'>256.9 kPa</div><div class=t style='left:59.54px;top:228.00px;font-size:11.2px;line-height:11.2px;font-weight:bold;color:#c81c30;transform:scaleX(0.9150);'>Battery voltage</div><div class=t style='left:146.25px;top:228.00px;font-size:11.5px;line-height:11.5px;font-weight:normal;color:#d45a62;transform:scaleX(0.9000);'>13.85 V</div><div class=t style='left:94.24px;top:241.00px;font-size:11.2px;line-height:11.2px;font-weight:bold;color:#bc1c80;transform:scaleX(0.9150);'>Lambda</div><div class=t style='left:146.25px;top:241.00px;font-size:11.5px;line-height:11.5px;font-weight:normal;color:#c85a9c;transform:scaleX(0.9000);'>0.937</div><div class=t style='left:110.74px;top:254.00px;font-size:11.2px;line-height:11.2px;font-weight:bold;color:#3b8fd4;transform:scaleX(0.9150);'>MAP</div><div class=t style='left:146.25px;top:254.00px;font-size:11.5px;line-height:11.5px;font-weight:normal;color:#5aa6de;transform:scaleX(0.9000);'>54.5 kPa</div><div class=t style='left:12.40px;top:335.00px;font-size:11.2px;line-height:11.2px;font-weight:bold;color:#74d444;transform:scaleX(0.9899);'>EGT 1</div><div class=t style='left:56.00px;top:335.00px;font-size:11.5px;line-height:11.5px;font-weight:normal;color:#8ed870;transform:scaleX(0.8896);'>683 °C</div><div class=t style='left:12.40px;top:348.00px;font-size:11.2px;line-height:11.2px;font-weight:bold;color:#2442c2;transform:scaleX(0.9899);'>EGT 2</div><div class=t style='left:56.00px;top:348.00px;font-size:11.5px;line-height:11.5px;font-weight:normal;color:#4a62c8;transform:scaleX(0.8896);'>674 °C</div><div class=t style='left:12.40px;top:361.00px;font-size:11.2px;line-height:11.2px;font-weight:bold;color:#d42222;transform:scaleX(0.9899);'>EGT 3</div><div class=t style='left:56.00px;top:361.00px;font-size:11.5px;line-height:11.5px;font-weight:normal;color:#d45a5a;transform:scaleX(0.8896);'>728 °C</div><div class=t style='left:12.40px;top:375.00px;font-size:11.2px;line-height:11.2px;font-weight:bold;color:#2ec48e;transform:scaleX(0.9899);'>EGT 4</div><div class=t style='left:56.00px;top:375.00px;font-size:11.5px;line-height:11.5px;font-weight:normal;color:#5ccaa4;transform:scaleX(0.8896);'>373 °C</div><div class=t style='left:16.70px;top:454.00px;font-size:11.5px;line-height:11.5px;font-weight:normal;color:#383838;transform:scaleX(0.8864);'>7m 8.752s</div><div class=t style='left:620.30px;top:454.00px;font-size:11.5px;line-height:11.5px;font-weight:normal;color:#383838;transform:scaleX(0.9017);'>7m 28.305s</div><div class=t style='left:14.60px;top:478.00px;font-size:11.5px;line-height:11.5px;font-weight:normal;color:#e4e4e4;transform:scaleX(1.0211);'>All logged data</div><div class=t style='left:117.00px;top:478.00px;font-size:11.5px;line-height:11.5px;font-weight:normal;color:#e4e4e4;transform:scaleX(1.0092);'>Scatter Plot</div><div class=t style='left:202.90px;top:478.00px;font-size:11.5px;line-height:11.5px;font-weight:normal;color:#e4e4e4;transform:scaleX(1.0155);'>Notes/Timeslip</div><div class=t style='left:302.50px;top:478.00px;font-size:11.5px;line-height:11.5px;font-weight:normal;color:#e4e4e4;transform:scaleX(1.0072);'>Search</div><div class=t style='left:363.60px;top:478.00px;font-size:11.5px;line-height:11.5px;font-weight:normal;color:#e4e4e4;transform:scaleX(1.0268);'>Embedded Tune-file</div><div class=t style='left:493.70px;top:478.00px;font-size:11.5px;line-height:11.5px;font-weight:normal;color:#e4e4e4;transform:scaleX(1.0260);'>Log info</div><div class=t style='left:7.00px;top:523.00px;font-size:11.5px;line-height:11.5px;font-weight:bold;color:#f4f414;'>-</div><div class=t style='left:13.50px;top:523.00px;font-size:11.2px;line-height:11.2px;font-weight:bold;color:#f4f414;'>Analog Inputs</div><div class=t style='left:21.00px;top:536.00px;font-size:11.5px;line-height:11.5px;font-weight:normal;color:#e2e2e2;transform:scaleX(1.0108);'>User AIN1 (Oiltemp)</div><div class=t style='left:21.00px;top:548.00px;font-size:11.5px;line-height:11.5px;font-weight:normal;color:#e2e2e2;transform:scaleX(1.0139);'>User AIN3 (Oljetryck)</div><div class=t style='left:21.00px;top:561.00px;font-size:11.5px;line-height:11.5px;font-weight:normal;color:#e2e2e2;transform:scaleX(1.0077);'>User AIN4 (Bransletryck)</div><div class=t style='left:157.50px;top:536.00px;font-size:11.5px;line-height:11.5px;font-weight:normal;color:#e2e2e2;'>72.9 °C</div><div class=t style='left:157.50px;top:548.00px;font-size:11.5px;line-height:11.5px;font-weight:normal;color:#e2e2e2;transform:scaleX(1.0307);'>311.2 kPa</div><div class=t style='left:157.50px;top:561.00px;font-size:11.5px;line-height:11.5px;font-weight:normal;color:#e2e2e2;transform:scaleX(1.0136);'>256.9 kPa</div><div class=t style='left:7.50px;top:573.00px;font-size:11.5px;line-height:11.5px;font-weight:bold;color:#f4f414;'>+</div><div class=t style='left:16.75px;top:573.00px;font-size:11.2px;line-height:11.2px;font-weight:bold;color:#f4f414;transform:scaleX(0.9592);'>Boost control</div><div class=t style='left:7.50px;top:585.00px;font-size:11.5px;line-height:11.5px;font-weight:bold;color:#f4f414;'>+</div><div class=t style='left:16.75px;top:585.00px;font-size:11.2px;line-height:11.2px;font-weight:bold;color:#f4f414;'>ECU Diagnostics</div><div class=t style='left:7.00px;top:598.00px;font-size:11.5px;line-height:11.5px;font-weight:bold;color:#f4f414;'>-</div><div class=t style='left:13.50px;top:598.00px;font-size:11.2px;line-height:11.2px;font-weight:bold;color:#f4f414;transform:scaleX(0.9916);'>Engine Control</div><div class=t style='left:237.70px;top:498.00px;font-size:11.5px;line-height:11.5px;font-weight:normal;color:#e2e2e2;'>Battery voltage</div><div class=t style='left:335.60px;top:498.00px;font-size:11.5px;line-height:11.5px;font-weight:normal;color:#e2e2e2;'>13.85 V</div><div class=t style='left:237.70px;top:511.00px;font-size:11.5px;line-height:11.5px;font-weight:normal;color:#e2e2e2;'>Coolanttemp</div><div class=t style='left:335.60px;top:511.00px;font-size:11.5px;line-height:11.5px;font-weight:normal;color:#e2e2e2;'>83.5 °C</div><div class=t style='left:237.70px;top:523.00px;font-size:11.5px;line-height:11.5px;font-weight:normal;color:#e2e2e2;'>Intake air temp</div><div class=t style='left:335.60px;top:523.00px;font-size:11.5px;line-height:11.5px;font-weight:normal;color:#e2e2e2;'>19.0 °C</div><div class=t style='left:237.70px;top:536.00px;font-size:11.5px;line-height:11.5px;font-weight:normal;color:#e2e2e2;'>Lambda</div><div class=t style='left:335.60px;top:536.00px;font-size:11.5px;line-height:11.5px;font-weight:normal;color:#e2e2e2;'>0.937</div><div class=t style='left:237.70px;top:548.00px;font-size:11.5px;line-height:11.5px;font-weight:normal;color:#e2e2e2;'>MAP</div><div class=t style='left:335.60px;top:548.00px;font-size:11.5px;line-height:11.5px;font-weight:normal;color:#e2e2e2;'>54.5 kPa</div><div class=t style='left:237.70px;top:561.00px;font-size:11.5px;line-height:11.5px;font-weight:normal;color:#e2e2e2;'>RPM</div><div class=t style='left:335.60px;top:561.00px;font-size:11.5px;line-height:11.5px;font-weight:normal;color:#e2e2e2;transform:scaleX(0.9857);'>1090 rpm</div><div class=t style='left:237.70px;top:573.00px;font-size:11.5px;line-height:11.5px;font-weight:normal;color:#e2e2e2;transform:scaleX(0.9935);'>Throttle position</div><div class=t style='left:335.60px;top:573.00px;font-size:11.5px;line-height:11.5px;font-weight:normal;color:#e2e2e2;'>0.0 %</div><div class=t style='left:223.00px;top:585.00px;font-size:11.5px;line-height:11.5px;font-weight:bold;color:#f4f414;'>-</div><div class=t style='left:230.00px;top:585.00px;font-size:11.2px;line-height:11.2px;font-weight:bold;color:#f4f414;transform:scaleX(1.0326);'>Fuel</div><div class=t style='left:237.70px;top:598.00px;font-size:11.5px;line-height:11.5px;font-weight:normal;color:#e2e2e2;'>Fuel duty primary</div><div class=t style='left:335.60px;top:598.00px;font-size:11.5px;line-height:11.5px;font-weight:normal;color:#e2e2e2;'>1.2 %</div><div class=t style='left:412.50px;top:498.00px;font-size:11.5px;line-height:11.5px;font-weight:normal;color:#e2e2e2;'>Fuel pulse primary</div><div class=t style='left:558.75px;top:498.00px;font-size:11.5px;line-height:11.5px;font-weight:normal;color:#e2e2e2;transform:scaleX(0.9934);'>1.316 ms</div><div class=t style='left:412.50px;top:511.00px;font-size:11.5px;line-height:11.5px;font-weight:normal;color:#e2e2e2;'>Lambda corr A</div><div class=t style='left:558.75px;top:511.00px;font-size:11.5px;line-height:11.5px;font-weight:normal;color:#e2e2e2;'>-30.0 %</div><div class=t style='left:412.50px;top:523.00px;font-size:11.5px;line-height:11.5px;font-weight:normal;color:#e2e2e2;'>Lambda target</div><div class=t style='left:558.75px;top:523.00px;font-size:11.5px;line-height:11.5px;font-weight:normal;color:#e2e2e2;'>1.000</div><div class=t style='left:412.50px;top:536.00px;font-size:11.5px;line-height:11.5px;font-weight:normal;color:#e2e2e2;'>Primary fuel pressure error</div><div class=t style='left:558.75px;top:536.00px;font-size:11.5px;line-height:11.5px;font-weight:normal;color:#e2e2e2;transform:scaleX(0.9894);'>303.8 kPa</div><div class=t style='left:412.50px;top:548.00px;font-size:11.5px;line-height:11.5px;font-weight:normal;color:#e2e2e2;'>Total fuel trim</div><div class=t style='left:558.75px;top:548.00px;font-size:11.5px;line-height:11.5px;font-weight:normal;color:#e2e2e2;'>1.4 %</div><div class=t style='left:397.50px;top:561.00px;font-size:11.5px;line-height:11.5px;font-weight:bold;color:#f4f414;'>-</div><div class=t style='left:404.50px;top:561.00px;font-size:11.2px;line-height:11.2px;font-weight:bold;color:#f4f414;transform:scaleX(0.9718);'>Ignition</div><div class=t style='left:412.50px;top:573.00px;font-size:11.5px;line-height:11.5px;font-weight:normal;color:#e2e2e2;'>Ignition angle</div><div class=t style='left:558.75px;top:573.00px;font-size:11.5px;line-height:11.5px;font-weight:normal;color:#e2e2e2;transform:scaleX(0.9887);'>13.1 BTDC</div><div class=t style='left:412.50px;top:585.00px;font-size:11.5px;line-height:11.5px;font-weight:normal;color:#e2e2e2;'>Real dwell</div><div class=t style='left:558.75px;top:585.00px;font-size:11.5px;line-height:11.5px;font-weight:normal;color:#e2e2e2;'>2.234 ms</div><div class=t style='left:412.50px;top:598.00px;font-size:11.5px;line-height:11.5px;font-weight:normal;color:#e2e2e2;'>Target dwell</div><div class=t style='left:558.75px;top:598.00px;font-size:11.5px;line-height:11.5px;font-weight:normal;color:#e2e2e2;'>2.217 ms</div><div class=t style='left:644.25px;top:498.00px;font-size:11.5px;line-height:11.5px;font-weight:normal;color:#e2e2e2;transform:scaleX(1.0096);'>Total ignition correction</div><div class=t style='left:772.50px;top:498.00px;font-size:11.5px;line-height:11.5px;font-weight:normal;color:#e2e2e2;transform:scaleX(1.0082);'>0.0 degrees</div><div class=t style='left:629.50px;top:511.00px;font-size:11.5px;line-height:11.5px;font-weight:bold;color:#f4f414;'>-</div><div class=t style='left:636.25px;top:511.00px;font-size:11.2px;line-height:11.2px;font-weight:bold;color:#f4f414;transform:scaleX(1.0148);'>Internal EGT</div><div class=t style='left:644.25px;top:523.00px;font-size:11.5px;line-height:11.5px;font-weight:normal;color:#e2e2e2;'>EGT 1</div><div class=t style='left:772.50px;top:523.00px;font-size:11.5px;line-height:11.5px;font-weight:normal;color:#e2e2e2;'>683 °C</div><div class=t style='left:644.25px;top:536.00px;font-size:11.5px;line-height:11.5px;font-weight:normal;color:#e2e2e2;'>EGT 2</div><div class=t style='left:772.50px;top:536.00px;font-size:11.5px;line-height:11.5px;font-weight:normal;color:#e2e2e2;'>674 °C</div><div class=t style='left:644.25px;top:548.00px;font-size:11.5px;line-height:11.5px;font-weight:normal;color:#e2e2e2;'>EGT 3</div><div class=t style='left:772.50px;top:548.00px;font-size:11.5px;line-height:11.5px;font-weight:normal;color:#e2e2e2;'>728 °C</div><div class=t style='left:644.25px;top:561.00px;font-size:11.5px;line-height:11.5px;font-weight:normal;color:#e2e2e2;'>EGT 4</div><div class=t style='left:772.50px;top:561.00px;font-size:11.5px;line-height:11.5px;font-weight:normal;color:#e2e2e2;'>373 °C</div><div class=t style='left:644.25px;top:573.00px;font-size:11.5px;line-height:11.5px;font-weight:normal;color:#e2e2e2;'>EGT Difference</div><div class=t style='left:772.50px;top:573.00px;font-size:11.5px;line-height:11.5px;font-weight:normal;color:#e2e2e2;'>355 °C</div><div class=t style='left:644.25px;top:585.00px;font-size:11.5px;line-height:11.5px;font-weight:normal;color:#e2e2e2;'>EGT Highest</div><div class=t style='left:772.50px;top:585.00px;font-size:11.5px;line-height:11.5px;font-weight:normal;color:#e2e2e2;'>730 °C</div><div class=t style='left:630.50px;top:598.00px;font-size:11.5px;line-height:11.5px;font-weight:bold;color:#f4f414;'>+</div><div class=t style='left:639.50px;top:598.00px;font-size:11.2px;line-height:11.2px;font-weight:bold;color:#f4f414;transform:scaleX(0.9632);'>Logging</div><div class=t style='left:848.30px;top:498.00px;font-size:11.5px;line-height:11.5px;font-weight:bold;color:#f4f414;'>+</div><div class=t style='left:857.00px;top:498.00px;font-size:11.2px;line-height:11.2px;font-weight:bold;color:#f4f414;transform:scaleX(1.0420);'>Speed/Gear</div><div class=t style='left:848.30px;top:511.00px;font-size:11.5px;line-height:11.5px;font-weight:bold;color:#f4f414;'>+</div><div class=t style='left:857.00px;top:511.00px;font-size:11.2px;line-height:11.2px;font-weight:bold;color:#f4f414;'>Trigger</div>
<div class=r style="left:3.6px;top:608px;width:956.4px;height:3px;background:#020202"></div>

</body></html>
